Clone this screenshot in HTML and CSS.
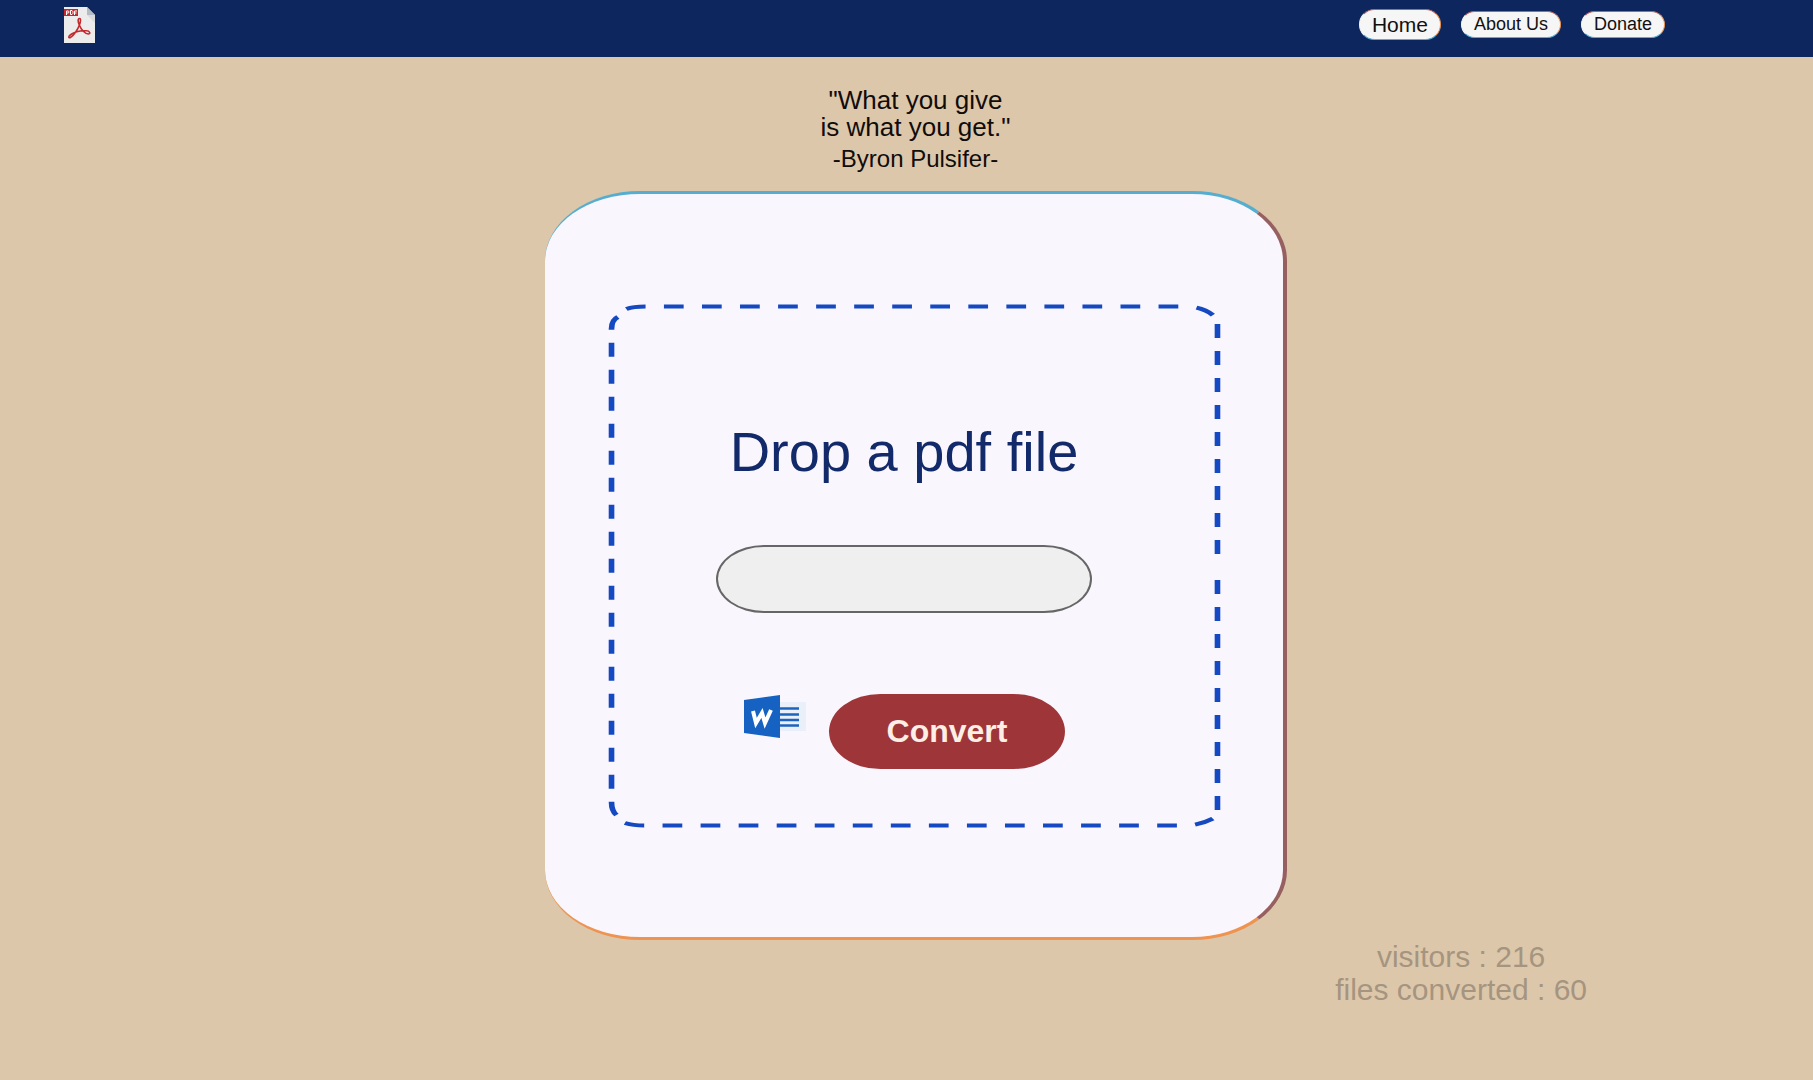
FILE: index.html
```html
<!DOCTYPE html>
<html lang="en">
<head>
<meta charset="utf-8">
<meta name="viewport" content="width=device-width, initial-scale=1">
<title>PDF to Word</title>
<link rel="stylesheet" href="styles.css">
</head>
<body>
<header class="topbar">
  <a class="logo" href="#" aria-label="PDF converter home">
    <svg width="31" height="36" viewBox="0 0 31 36" aria-hidden="true">
      <path fill="#ececec" d="M0 0h23l8 8v28H0z"/>
      <path fill="#b3bcc4" d="M23 0l8 8h-8z"/>
      <path fill="#d9dadc" d="M23 8h8v8z"/>
      <path fill="#c2282d" d="M0 2h14v7H0z"/>
      <g fill="none" stroke="#fff" stroke-width="1"><path d="M2.500 8V4H4q1 0 1 1t-1 1H3M6.500 3.500v4H8q1-.5 1-2t-1-2zM10.500 8V4H13M10.500 6H12.500"/></g>
      <path fill="none" stroke="#c2282d" stroke-width="1.600" stroke-linejoin="round" d="M15.500 11.500c-2 0-1.500 3.500-.2 6.500 1.800 4.500 6 9 9 9 2.500 0 1.800-3-2-3.200-5-.3-12 1.200-15.500 3.700-3 2-2.200 4-.4 3 3.500-2 7.600-8.500 9-12.500 1.300-3.500 1.600-6.500.1-6.500z"/>
    </svg>
  </a>
  <nav class="menu" aria-label="Main">
    <a class="pill pill-active" href="#">Home</a>
    <a class="pill" href="#about">About Us</a>
    <a class="pill" href="#donate">Donate</a>
  </nav>
</header>
<main class="page">
  <figure class="quote">
    <blockquote class="quote-text">"What you give<br>is what you get."</blockquote>
    <figcaption class="quote-author">-Byron Pulsifer-</figcaption>
  </figure>
  <section class="card">
    <form class="dropzone">
      <svg class="dashes" viewBox="0 0 435 524" preserveAspectRatio="none" aria-hidden="true">
        <path d="M13 5Q18 2.500 27 2.500H409Q422 2.500 430 12"/>
        <path d="M432.500 20V250"/>
        <path d="M432.500 276V506"/>
        <path d="M7 13Q2.500 16 2.500 25V498Q2.500 507 6 511"/>
        <path d="M12 519Q18 521.500 26 521.500H409Q420 521.500 430 514"/>
      </svg>
      <label class="drop-title" for="pdf">Drop a pdf file</label>
      <input class="drop-input" id="pdf" type="text">
      <div class="actions">
        <svg class="word" width="64" height="44" viewBox="0 0 64 44" aria-hidden="true">
          <path fill="#e9f0fa" d="M35 7h28v29H35z"/>
          <path stroke="#1d63bd" stroke-width="2.500" d="M36 13.500h20M36 19.500h20M36 25h20M36 30.500h20"/>
          <path fill="#1562c2" d="M1 5L37 0v43L1 38z"/>
          <path fill="none" stroke="#fff" stroke-width="4" d="M10 16l3 12 6-10 3 10 6-13"/>
        </svg>
        <button class="convert" type="button">Convert</button>
      </div>
    </form>
  </section>
</main>
<footer class="stats">
  <div>visitors : 216</div>
  <div>files converted : 60</div>
</footer>
</body>
</html>
```
FILE: styles.css
```css
* {
  box-sizing: border-box;
}

body {
  margin: 0;
  min-height: 100vh;
  background: #ddc7aa;
  color: #100c0a;
  font-family: "Liberation Sans", Arial, sans-serif;
}

.topbar {
  display: flex;
  align-items: flex-start;
  justify-content: space-between;
  min-height: 57px;
  padding: 7px 148px 7px 64px;
  background: #0e265e;
}

.logo,
.logo svg {
  display: block;
}

.menu {
  display: flex;
  align-items: center;
  gap: 20px;
  padding-top: 2px;
}

.pill {
  padding: 0 12px;
  border: 1px solid;
  border-color: #b9655f #ee9450 #5aaecf #f6f6f6;
  border-radius: 16px;
  background: #f6f6f6;
  color: #111;
  font-size: 18px;
  line-height: 25px;
  text-decoration: none;
}

.pill-active {
  font-size: 21px;
  line-height: 29px;
}

.page {
  display: flex;
  flex-direction: column;
  align-items: center;
  padding: 30px 0 0 18px;
}

.quote {
  margin: 0 0 19px;
  text-align: center;
}

.quote-text {
  margin: 0;
  font-size: 26px;
  line-height: 27px;
}

.quote-author {
  padding-top: 4px;
  font-size: 24px;
  line-height: 27px;
}

.card {
  width: 742px;
  max-width: 100%;
  padding: 110px 62px 109px 63px;
  border-style: solid;
  border-width: 3px 4px 3px 0;
  border-color: #55aed0 #976060 #ee9450 transparent;
  border-radius: 95px / 70px;
  background: #f9f6fd;
}

.dropzone {
  position: relative;
  display: flex;
  flex-direction: column;
  align-items: center;
  padding: 118px 20px 59px 0;
}

.dashes {
  position: absolute;
  inset: 0;
  width: 100%;
  height: 100%;
  fill: none;
  stroke: #1549c2;
  stroke-width: 4px;
  stroke-dasharray: 14 13;
  pointer-events: none;
}

.drop-title {
  color: #12296a;
  font-size: 56px;
  line-height: 60px;
}

.drop-input {
  width: 376px;
  max-width: 100%;
  height: 68px;
  margin: 63px 0 81px;
  padding: 0 40px;
  border: 2px solid #666;
  border-radius: 48px / 34px;
  background: #efefef;
  font: inherit;
}

.actions {
  display: flex;
  align-items: flex-start;
  gap: 22px;
}

.word {
  margin-top: 1px;
}

.convert {
  width: 236px;
  height: 75px;
  padding: 0;
  border: 0;
  border-radius: 52px / 38px;
  background: #9e3539;
  color: #fdeee6;
  font-family: inherit;
  font-size: 32px;
  font-weight: bold;
}

.stats {
  display: flex;
  flex-direction: column;
  align-items: center;
  width: max-content;
  margin-left: auto;
  margin-right: 226px;
  color: #a59580;
  font-size: 30px;
  line-height: 33px;
}
```
